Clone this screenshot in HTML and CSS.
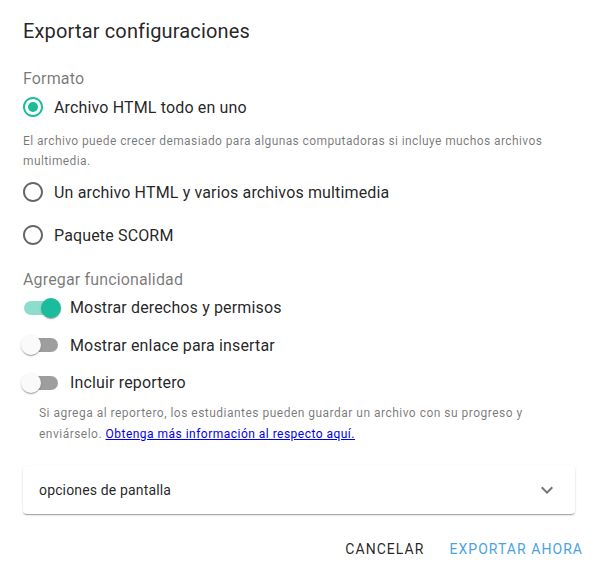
FILE: index.html
```html
<!doctype html>
<html lang="es">
<head>
<meta charset="utf-8">
<title>Exportar configuraciones</title>
<meta name="viewport" content="width=device-width, initial-scale=1">
<link rel="stylesheet" href="styles.css">
</head>
<body>

  <div class="dialog">
    <h2 class="dialog-title">Exportar configuraciones</h2>

    <div class="dialog-content">
      <div class="group-label first">Formato</div>

      <label class="radio-row top">
        <span class="radio checked">
          <svg viewBox="0 0 24 24" width="24" height="24">
            <path d="M12 2C6.48 2 2 6.48 2 12s4.48 10 10 10 10-4.48 10-10S17.52 2 12 2zm0 18c-4.42 0-8-3.58-8-8s3.58-8 8-8 8 3.58 8 8-3.58 8-8 8z"/>
            <circle cx="12" cy="12" r="5"/>
          </svg>
        </span>
        <span class="row-text">Archivo HTML todo en uno</span>
      </label>
      <p class="helper">El archivo puede crecer demasiado para algunas computadoras si incluye muchos archivos multimedia.</p>

      <label class="radio-row">
        <span class="radio">
          <svg viewBox="0 0 24 24" width="24" height="24">
            <path d="M12 2C6.48 2 2 6.48 2 12s4.48 10 10 10 10-4.48 10-10S17.52 2 12 2zm0 18c-4.42 0-8-3.58-8-8s3.58-8 8-8 8 3.58 8 8-3.58 8-8 8z"/>
          </svg>
        </span>
        <span class="row-text">Un archivo HTML y varios archivos multimedia</span>
      </label>

      <label class="radio-row">
        <span class="radio">
          <svg viewBox="0 0 24 24" width="24" height="24">
            <path d="M12 2C6.48 2 2 6.48 2 12s4.48 10 10 10 10-4.48 10-10S17.52 2 12 2zm0 18c-4.42 0-8-3.58-8-8s3.58-8 8-8 8 3.58 8 8-3.58 8-8 8z"/>
          </svg>
        </span>
        <span class="row-text">Paquete SCORM</span>
      </label>

      <div class="group-label second">Agregar funcionalidad</div>

      <label class="switch-row top">
        <span class="switch on"><span class="track"></span><span class="thumb"></span></span>
        <span class="row-text">Mostrar derechos y permisos</span>
      </label>

      <label class="switch-row">
        <span class="switch"><span class="track"></span><span class="thumb"></span></span>
        <span class="row-text">Mostrar enlace para insertar</span>
      </label>

      <label class="switch-row">
        <span class="switch"><span class="track"></span><span class="thumb"></span></span>
        <span class="row-text">Incluir reportero</span>
      </label>
      <p class="helper indented">Si agrega al reportero, los estudiantes pueden guardar un archivo con su progreso y enviárselo. <a href="#">Obtenga más información al respecto aquí.</a></p>

      <div class="accordion">
        <span>opciones de pantalla</span>
        <svg class="chevron" viewBox="0 0 24 24" width="24" height="24">
          <path d="M16.59 8.59L12 13.17 7.41 8.59 6 10l6 6 6-6z"/>
        </svg>
      </div>
    </div>

    <div class="dialog-actions">
      <button class="btn">Cancelar</button>
      <button class="btn primary">Exportar ahora</button>
    </div>
  </div>

</body>
</html>
```

FILE: styles.css
```css
* { box-sizing: border-box; }

body {
	margin: 0;
	background-color: #ffffff;
	color: rgba(0, 0, 0, 0.87);
	font-family: Roboto, "Liberation Sans", sans-serif;
}

.dialog {
	width: 596px;
	height: 572px;
}

.dialog-title {
	margin: 0;
	padding: 15px 23px 0;
	font-size: 20px;
	font-weight: 400;
	line-height: 32px;
	letter-spacing: 0.15px;
}

.dialog-content {
	padding: 0 21px 0 23px;
	display: flex;
	flex-direction: column;
}

.group-label {
	color: rgba(0, 0, 0, 0.54);
	font-size: 16px;
	line-height: 16px;
	letter-spacing: 0.15px;
}

.group-label.first { margin-top: 24px; }

.group-label.second { margin-top: 15px; }

/* radio rows */
.radio-row {
	display: flex;
	align-items: center;
	height: 42px;
	margin-left: -11px;
	margin-bottom: 1px;
}

.radio-row.top { margin-top: -1px; }

.radio {
	display: flex;
	padding: 9px;
	fill: rgba(0, 0, 0, 0.6);
}

.radio.checked { fill: #1abc9c; }

.row-text {
	font-size: 16px;
	letter-spacing: 0.15px;
}

.helper {
	margin: 3px 0 0;
	color: rgba(0, 0, 0, 0.54);
	font-size: 12px;
	line-height: 19.5px;
	letter-spacing: 0.4px;
}

.helper.indented {
	margin: 1px 0 0 16px;
	line-height: 21px;
	letter-spacing: 0.48px;
}

.helper a { color: #0000ee; }

/* switches */
.switch-row {
	display: flex;
	align-items: center;
	height: 37.5px;
	margin-left: -11px;
}

.switch-row.top { margin-top: 1px; }

.switch {
	position: relative;
	width: 58px;
	height: 38px;
	padding: 12px;
	flex-shrink: 0;
}

.track {
	display: block;
	width: 100%;
	height: 14px;
	border-radius: 7px;
	background-color: #000;
	opacity: 0.38;
}

.thumb {
	position: absolute;
	top: 9px;
	left: 9px;
	width: 20px;
	height: 20px;
	border-radius: 50%;
	background-color: #fafafa;
	box-shadow: 0 2px 1px -1px rgba(0,0,0,0.2), 0 1px 1px 0 rgba(0,0,0,0.14), 0 1px 3px 0 rgba(0,0,0,0.12);
}

.switch.on .track {
	background-color: #1abc9c;
	opacity: 0.5;
}

.switch.on .thumb {
	left: 29px;
	background-color: #1abc9c;
}

/* accordion */
.accordion {
	display: flex;
	align-items: center;
	justify-content: space-between;
	height: 48px;
	margin-top: 21px;
	padding: 0 16px;
	border-radius: 4px;
	font-size: 14px;
	letter-spacing: 0.15px;
	box-shadow: 0 2px 1px -1px rgba(0,0,0,0.2), 0 1px 1px 0 rgba(0,0,0,0.14), 0 1px 3px 0 rgba(0,0,0,0.12);
}

.chevron { fill: rgba(0, 0, 0, 0.54); }

/* buttons */
.dialog-actions {
	display: flex;
	justify-content: flex-end;
	gap: 9px;
	padding: 17px 5px 0;
}

.btn {
	background: none;
	border: none;
	padding: 6px 8px;
	font-family: inherit;
	font-size: 14px;
	line-height: 24px;
	letter-spacing: 1.05px;
	text-transform: uppercase;
	color: rgba(0, 0, 0, 0.87);
}

.btn.primary { color: #4aa3df; }
```
